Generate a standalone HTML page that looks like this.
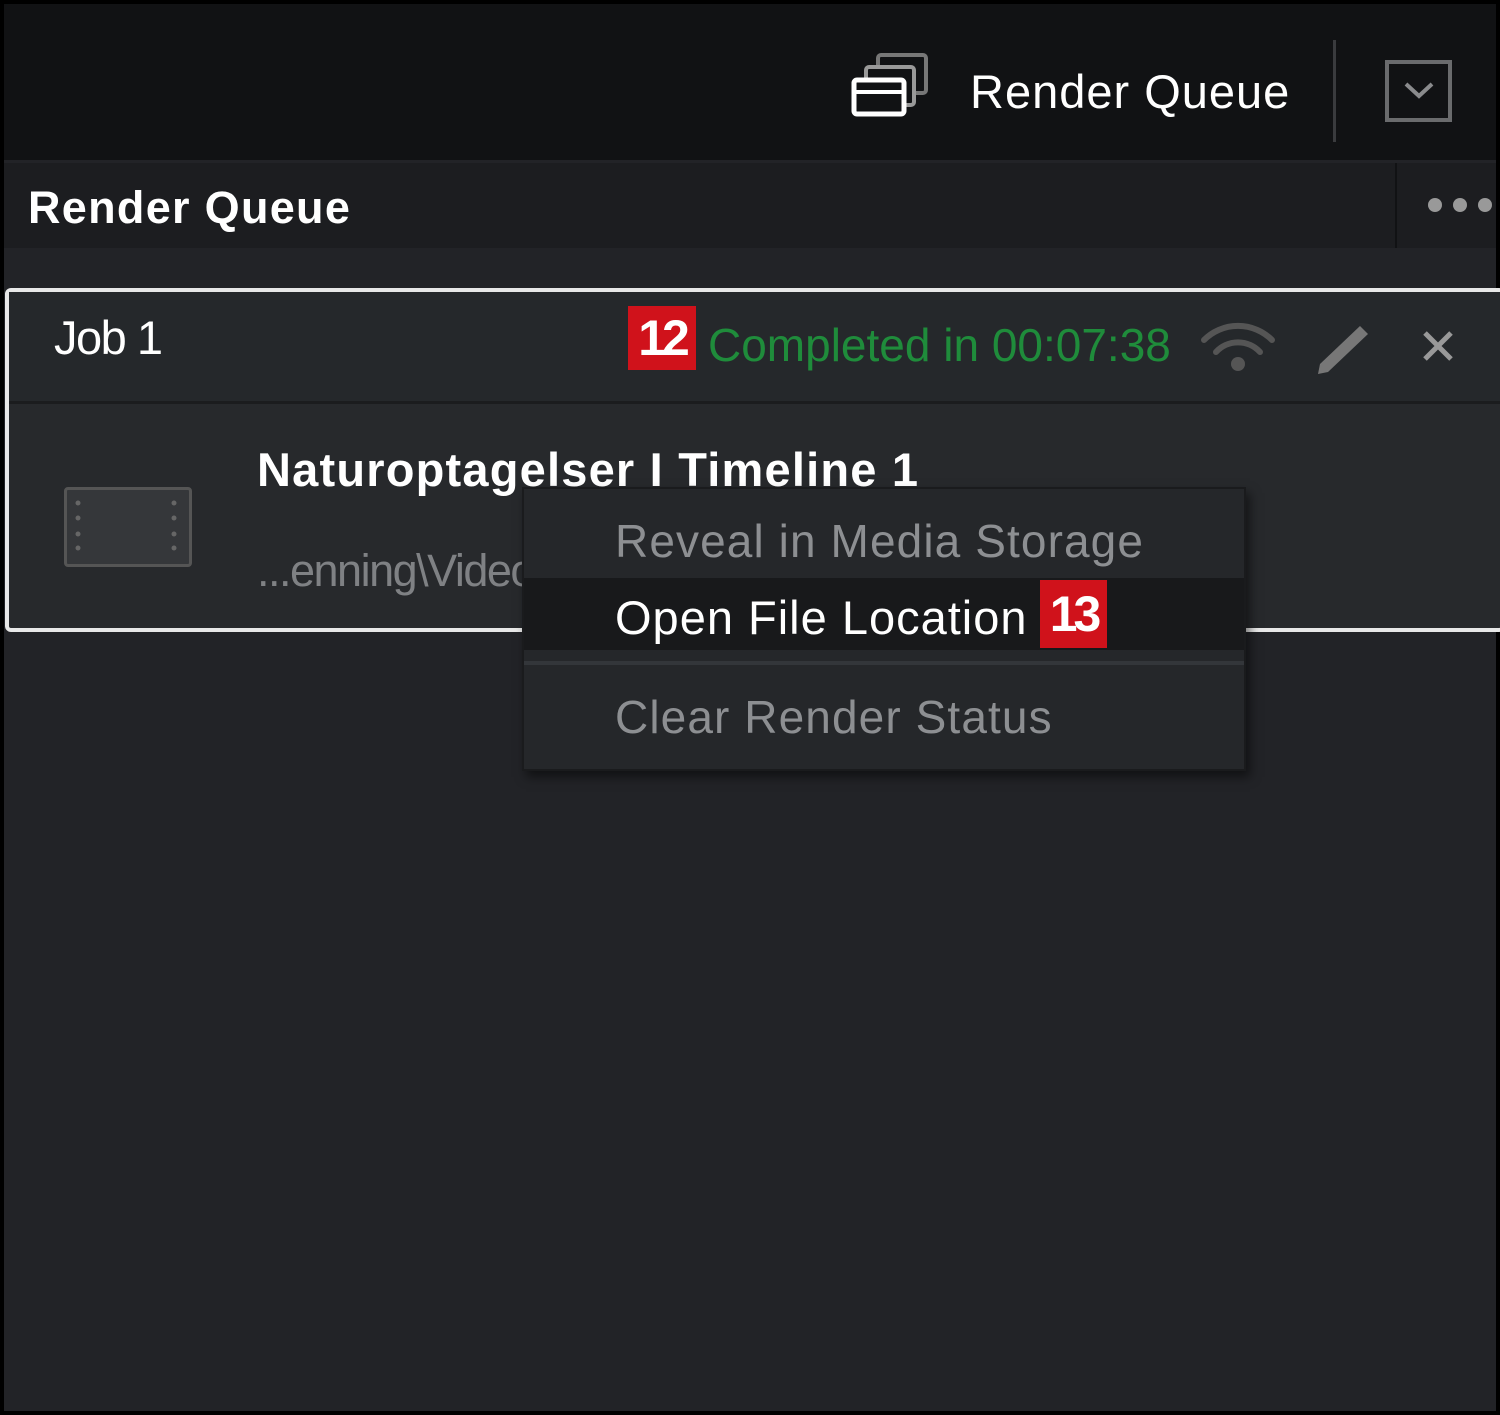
<!DOCTYPE html>
<html><head><style>
*{margin:0;padding:0;box-sizing:border-box}
body{width:1500px;height:1415px;background:#000;font-family:"Liberation Sans",sans-serif;overflow:hidden;position:relative}
.a{position:absolute}
.t{white-space:nowrap;letter-spacing:-1.5px}
</style></head><body>
<div class="a" style="left:4px;top:4px;width:1492px;height:1407px;background:#222327"></div>
<div class="a" style="left:4px;top:4px;width:1492px;height:156px;background:#111214"></div>
<div class="a" style="left:4px;top:163px;width:1492px;height:85px;background:#1c1d20"></div>
<div class="a" style="left:1395px;top:163px;width:2px;height:85px;background:#111214"></div>
<svg class="a" style="left:850px;top:50px" width="80" height="70" viewBox="0 0 80 70">
<rect x="28" y="5" width="48" height="38" rx="3" fill="none" stroke="#777" stroke-width="4"/>
<rect x="16" y="17" width="48" height="38" rx="3" fill="#111214" stroke="#999" stroke-width="4"/>
<rect x="4" y="30" width="50" height="34" rx="3" fill="#111214" stroke="#fff" stroke-width="5"/>
<line x1="4" y1="42" x2="54" y2="42" stroke="#fff" stroke-width="4"/>
</svg>
<div class="a t" style="left:970px;top:64px;font-size:47px;color:#fff;letter-spacing:1px">Render Queue</div>
<div class="a" style="left:1333px;top:40px;width:3px;height:102px;background:#3a3b3e"></div>
<div class="a" style="left:1385px;top:60px;width:67px;height:62px;border:4px solid #6a6b6d"></div>
<svg class="a" style="left:1400px;top:78px" width="38" height="24"><polyline points="6,6 19,18 32,6" fill="none" stroke="#8a8b8d" stroke-width="4"/></svg>
<div class="a t" style="left:28px;top:182px;font-size:45px;font-weight:bold;color:#fff;letter-spacing:1.3px">Render Queue</div>
<div class="a" style="left:1428px;top:198px;width:14px;height:14px;border-radius:50%;background:#999;box-shadow:25px 0 #999,50px 0 #999"></div>
<div class="a" style="left:5px;top:288px;width:1500px;height:344px;border:4px solid #e8e8e8;border-radius:6px;background:#27292c"></div>
<div class="a" style="left:9px;top:292px;width:1491px;height:112px;background:#25282b;border-bottom:3px solid #1b1c1e"></div>
<div class="a t" style="left:54px;top:310px;font-size:47px;color:#fff">Job 1</div>
<div class="a" style="left:628px;top:306px;width:68px;height:64px;background:#d0121b;color:#fff;font-size:50px;font-weight:bold;text-align:center;line-height:64px;letter-spacing:-4px">12</div>
<div class="a t" style="left:708px;top:318px;font-size:46px;color:#1f8c3b;letter-spacing:0px">Completed in 00:07:38</div>
<svg class="a" style="left:1198px;top:318px" width="80" height="56" viewBox="0 0 80 56">
<path d="M6 22 A48 48 0 0 1 74 22" fill="none" stroke="#555" stroke-width="6" stroke-linecap="round"/>
<path d="M18 34 A30 30 0 0 1 62 34" fill="none" stroke="#555" stroke-width="6" stroke-linecap="round"/>
<circle cx="40" cy="46" r="7" fill="#555"/></svg>
<svg class="a" style="left:1312px;top:320px" width="62" height="58" viewBox="0 0 62 58">
<path d="M48 6 L56 14 L16 52 L6 54 L8 44 Z" fill="#777"/></svg>
<svg class="a" style="left:1420px;top:328px" width="36" height="36"><path d="M5 5 L31 31 M31 5 L5 31" stroke="#999" stroke-width="5"/></svg>
<div class="a" style="left:64px;top:487px;width:128px;height:80px;border:3px solid #555;border-radius:4px;background:#35373a"></div>
<svg class="a" style="left:64px;top:487px" width="128" height="80">
<g fill="#666"><circle cx="14" cy="16" r="2.5"/><circle cx="14" cy="31" r="2.5"/><circle cx="14" cy="47" r="2.5"/><circle cx="14" cy="61" r="2.5"/>
<circle cx="110" cy="16" r="2.5"/><circle cx="110" cy="31" r="2.5"/><circle cx="110" cy="47" r="2.5"/><circle cx="110" cy="61" r="2.5"/></g></svg>
<div class="a t" style="left:257px;top:442px;font-size:47px;font-weight:bold;color:#fff;letter-spacing:1.2px">Naturoptagelser I Timeline 1</div>
<div class="a t" style="left:257px;top:545px;font-size:45px;color:#7f8184">...enning\Video</div>
<div class="a" style="left:522px;top:487px;width:724px;height:284px;background:#25272a;border:2px solid #1a1b1d;box-shadow:4px 6px 10px rgba(0,0,0,.5)"></div>
<div class="a t" style="left:615px;top:514px;font-size:46px;color:#8d8f92;letter-spacing:1.1px">Reveal in Media Storage</div>
<div class="a" style="left:524px;top:578px;width:720px;height:72px;background:#18191b"></div>
<div class="a t" style="left:615px;top:590px;font-size:47px;color:#fff;letter-spacing:1px">Open File Location</div>
<div class="a" style="left:1040px;top:580px;width:67px;height:68px;background:#d0121b;color:#fff;font-size:50px;font-weight:bold;text-align:center;line-height:68px;letter-spacing:-4px">13</div>
<div class="a" style="left:524px;top:661px;width:720px;height:4px;background:#33363a"></div>
<div class="a t" style="left:615px;top:690px;font-size:46px;color:#8d8f92;letter-spacing:1.1px">Clear Render Status</div>
</body></html>
